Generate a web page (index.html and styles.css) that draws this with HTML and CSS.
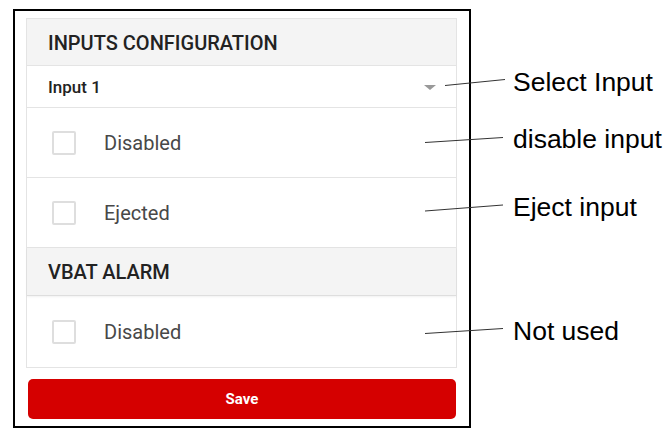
FILE: index.html
```html
<!DOCTYPE html>
<html>
<head>
<meta charset="utf-8">
<link rel="stylesheet" href="styles.css">
</head>
<body>
<div class="stage">
  <div class="frame">
    <div class="panel">
      <div class="section-head">INPUTS CONFIGURATION</div>
      <div class="select-row">
        <span class="select-value">Input 1</span>
        <span class="caret"></span>
      </div>
      <div class="check-row"><span class="box"></span><span class="label">Disabled</span></div>
      <div class="check-row"><span class="box"></span><span class="label">Ejected</span></div>
      <div class="section-head section-head--shadow">VBAT ALARM</div>
      <div class="check-row check-row--last"><span class="box"></span><span class="label">Disabled</span></div>
    </div>
    <button class="save">Save</button>
  </div>
  <svg class="notes" width="670" height="440" viewBox="0 0 670 440">
    <g stroke="#333" stroke-width="1">
      <line x1="445" y1="85.5" x2="505" y2="79.5"/>
      <line x1="425" y1="142.5" x2="503" y2="137.5"/>
      <line x1="425" y1="211" x2="503" y2="205"/>
      <line x1="425" y1="333.5" x2="503" y2="328.5"/>
    </g>
    <g class="note-text">
      <text x="513" y="91">Select Input</text>
      <text x="513" y="148">disable input</text>
      <text x="513" y="216">Eject input</text>
      <text x="513" y="340">Not used</text>
    </g>
  </svg>
</div>
</body>
</html>
```
FILE: styles.css
```css
html, body {
  margin: 0;
  padding: 0;
  background: #fff;
}
.stage {
  position: relative;
  width: 670px;
  height: 440px;
  overflow: hidden;
  font-family: Roboto, "Noto Sans", sans-serif;
}
.frame {
  box-sizing: border-box;
  margin: 9px 0 0 13px;
  width: 458px;
  height: 419px;
  border: 2px solid #000;
  padding: 7px 12px 0 11px;
}
.panel {
  border: 1px solid #e4e4e4;
  background: #fff;
}
.section-head {
  box-sizing: border-box;
  height: 47px;
  background: #f4f4f4;
  border-bottom: 1px solid #e4e4e4;
  padding-left: 21px;
  display: flex;
  align-items: center;
  font-size: 20px;
  font-weight: 500;
  color: #222;
  padding-top: 1px;
}
.section-head--shadow {
  height: 48px;
  border-bottom: 1px solid #dedede;
  box-shadow: 0 1px 2px rgba(0,0,0,0.06);
}
.select-row {
  box-sizing: border-box;
  height: 42px;
  border-bottom: 1px solid #e4e4e4;
  display: flex;
  align-items: center;
  justify-content: space-between;
  padding: 0 21px 0 21px;
}
.select-value {
  font-size: 17px;
  font-weight: 500;
  color: #222;
  padding-top: 1px;
}
.caret {
  width: 0;
  height: 0;
  border-left: 6px solid transparent;
  border-right: 6px solid transparent;
  border-top: 5px solid #999;
  margin-right: -1px;
  margin-top: 2px;
}
.check-row {
  box-sizing: border-box;
  height: 70px;
  border-bottom: 1px solid #e4e4e4;
  display: flex;
  align-items: center;
  padding-left: 25px;
}
.check-row--last {
  height: 71px;
  border-bottom: none;
}
.box {
  box-sizing: border-box;
  width: 24px;
  height: 24px;
  border: 2px solid #dedede;
  border-radius: 2px;
  margin-right: 28px;
}
.label {
  font-size: 20px;
  color: #484848;
}
.save {
  display: block;
  box-sizing: border-box;
  margin: 11px 0 0 2px;
  width: 428px;
  height: 40px;
  border: none;
  border-radius: 5px;
  background: #d50000;
  color: #fff;
  font-family: Roboto, "Noto Sans", sans-serif;
  font-size: 15px;
  font-weight: 700;
  padding: 0;
  cursor: pointer;
}
.notes {
  position: absolute;
  left: 0;
  top: 0;
  pointer-events: none;
}
.note-text {
  font-family: "Liberation Sans", Arial, sans-serif;
  font-size: 26.5px;
  fill: #000;
}
```
